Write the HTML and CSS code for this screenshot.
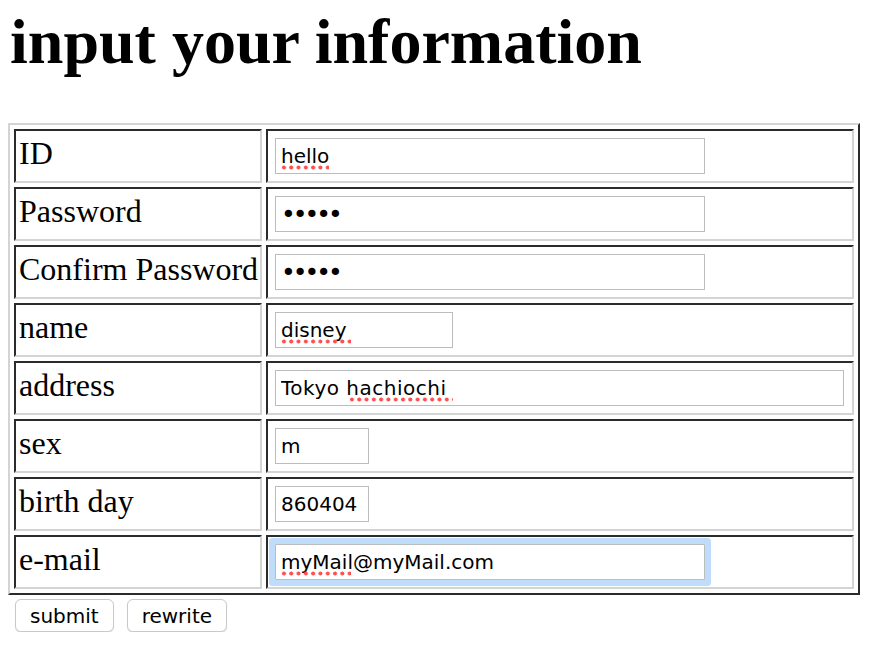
FILE: index.html
```html
<!DOCTYPE html>
<html>
<head>
<meta charset="utf-8">
<title>input your information</title>
<link rel="stylesheet" href="styles.css">
</head>
<body>
<h1 class="title">input your information</h1>
<form class="form">
  <table class="info">
    <colgroup><col class="col-label"><col class="col-field"></colgroup>
    <tr>
      <td class="label">ID</td>
      <td class="field"><span class="wrap"><input class="inp w-long" type="text" value="hello"><span class="spell sp-hello"></span></span></td>
    </tr>
    <tr>
      <td class="label">Password</td>
      <td class="field"><input class="inp w-long pw" type="password" value="hello"></td>
    </tr>
    <tr>
      <td class="label">Confirm Password</td>
      <td class="field"><input class="inp w-long pw" type="password" value="hello"></td>
    </tr>
    <tr>
      <td class="label">name</td>
      <td class="field"><span class="wrap"><input class="inp w-mid" type="text" value="disney"><span class="spell sp-disney"></span></span></td>
    </tr>
    <tr>
      <td class="label">address</td>
      <td class="field"><span class="wrap"><input class="inp w-full wide" type="text" value="Tokyo hachiochi"><span class="spell sp-hachi"></span></span></td>
    </tr>
    <tr>
      <td class="label">sex</td>
      <td class="field"><input class="inp w-short" type="text" value="m"></td>
    </tr>
    <tr>
      <td class="label">birth day</td>
      <td class="field"><input class="inp w-short" type="text" value="860404"></td>
    </tr>
    <tr>
      <td class="label">e-mail</td>
      <td class="field"><span class="wrap"><input class="inp w-long focused" type="text" value="myMail@myMail.com"><span class="spell sp-mail"></span></span></td>
    </tr>
  </table>
  <div class="actions">
    <button class="btn" type="submit">submit</button>
    <button class="btn" type="reset">rewrite</button>
  </div>
</form>
</body>
</html>
```

FILE: styles.css
```css
html, body {
  background: #ffffff;
}
body {
  margin: 8px;
  font-family: "Liberation Serif", "Times New Roman", serif;
  color: #000;
}
.title {
  font-family: "Liberation Serif", "Times New Roman", serif;
  font-size: 64px;
  font-weight: bold;
  line-height: 68px;
  margin: 0 0 47px 0;
  padding-left: 2px;
}
.form {
  margin: 0;
}
.info {
  table-layout: fixed;
  width: 852px;
  border-collapse: separate;
  border-spacing: 4px;
  border-style: solid;
  border-width: 2px;
  border-color: #d4d4d4 #2b2b2b #2b2b2b #d4d4d4;
}
.col-label { width: 248px; }
.col-field { width: 588px; }
.info td {
  padding: 2px;
  border-style: solid;
  border-width: 2px;
  border-color: #2b2b2b #d4d4d4 #d4d4d4 #2b2b2b;
  vertical-align: middle;
}
.info td.label {
  font-size: 32px;
  white-space: nowrap;
  padding: 0 0 5px 3px;
}
.field {
  font-size: 0;
  line-height: 0;
}
.wrap {
  position: relative;
  display: inline-block;
}
.inp {
  box-sizing: border-box;
  height: 36px;
  margin: 5px;
  padding: 0 5px;
  border: 1px solid #bdbdbd;
  border-radius: 0;
  background: #fff;
  font-family: "DejaVu Sans", Verdana, sans-serif;
  font-size: 20px;
  color: #000;
  vertical-align: top;
  outline: none;
}
.pw {
  font-size: 25px;
  letter-spacing: -3px;
}
.wide {
  letter-spacing: 0.5px;
}
.w-long { width: 430px; }
.w-mid { width: 178px; }
.w-full { width: 569px; }
.w-short { width: 94px; }
.focused {
  box-shadow: 0 0 0 6px #bfdcfb;
  border-radius: 1px;
}
.spell {
  position: absolute;
  top: 32px;
  height: 5px;
  background-image: radial-gradient(circle at 3px 2.5px, #ff4f4f 0, #ff4f4f 1.7px, rgba(255,79,79,0) 2.3px);
  background-size: 7.3px 5px;
  background-repeat: repeat-x;
}
.sp-hello { left: 11px; width: 48px; }
.sp-disney { left: 11px; width: 70px; }
.sp-hachi { left: 79px; width: 104px; }
.sp-mail { left: 11px; width: 70px; }
.actions {
  display: flex;
  gap: 13px;
  padding: 4px 0 0 7px;
}
.btn {
  box-sizing: border-box;
  height: 33px;
  padding: 2px 14px 0;
  line-height: 29px;
  border: 1px solid #c9c9c9;
  border-radius: 6px;
  background: #fff;
  box-shadow: 0 1px 1px rgba(0,0,0,0.12);
  font-family: "DejaVu Sans", Verdana, sans-serif;
  font-size: 20px;
  color: #000;
  margin: 0;
}
```
